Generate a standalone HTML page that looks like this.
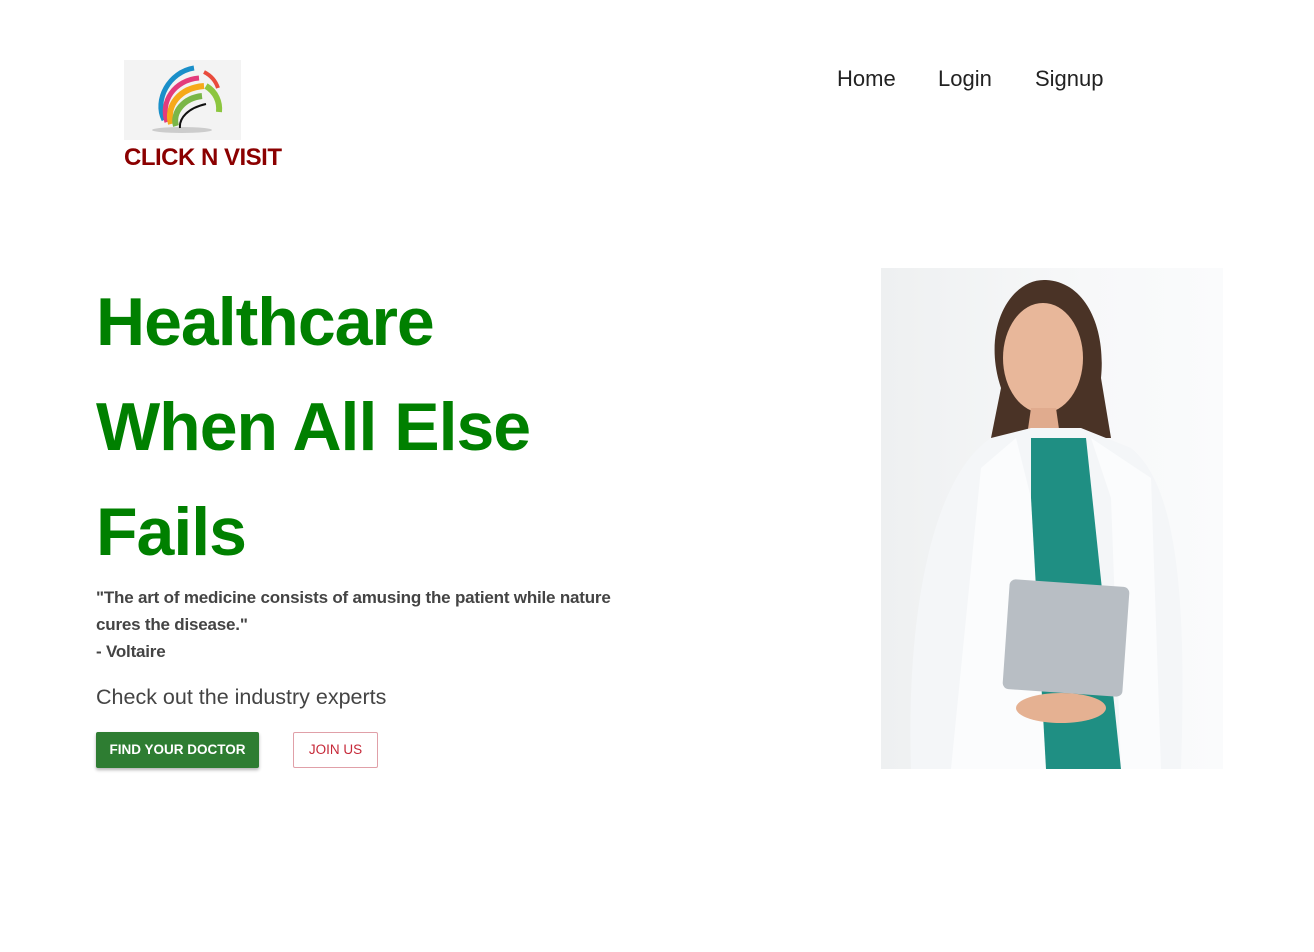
<!DOCTYPE html>
<html><head><style>
body{margin:0;background:#fff;font-family:"Liberation Sans",sans-serif;width:1314px;height:952px;position:relative;overflow:hidden}
.a{position:absolute}
nav a{position:absolute;top:66px;font-size:22px;color:#222;text-decoration:none}
h1{position:absolute;left:96px;top:270px;margin:0;font-size:68px;line-height:105px;color:#008000;font-weight:bold;letter-spacing:-1px}
</style></head><body>
<div class="a" style="left:124px;top:60px;width:117px;height:80px;background:#f3f3f3">
<svg width="117" height="80" viewBox="0 0 117 80">
<ellipse cx="58" cy="70" rx="30" ry="3" fill="#ccc"/>
<path d="M40 60 C30 40 45 12 70 8" stroke="#1a8fc9" stroke-width="5" fill="none"/>
<path d="M43 62 C36 42 50 20 75 18" stroke="#e33b7c" stroke-width="5" fill="none"/>
<path d="M47 64 C42 46 55 28 80 26" stroke="#f6a91a" stroke-width="6" fill="none"/>
<path d="M52 66 C48 52 60 38 78 36" stroke="#7ab648" stroke-width="6" fill="none"/>
<path d="M56 68 C55 58 64 48 82 44" stroke="#111" stroke-width="2" fill="none"/>
<path d="M82 26 C92 32 96 42 95 52" stroke="#8cc63f" stroke-width="6" fill="none"/>
<path d="M80 12 C88 16 92 22 94 28" stroke="#e94b3c" stroke-width="4" fill="none"/>
</svg></div>
<div class="a" style="left:124px;top:144px;font-size:24px;font-weight:bold;color:#8b0000;letter-spacing:-0.5px">CLICK N VISIT</div>
<nav><a style="left:837px">Home</a><a style="left:938px">Login</a><a style="left:1035px">Signup</a></nav>
<h1>Healthcare<br>When All Else<br>Fails</h1>
<div class="a" style="left:96px;top:584px;width:560px;font-size:17px;line-height:27px;font-weight:bold;color:#444;letter-spacing:-0.2px">"The art of medicine consists of amusing the patient while nature cures the disease."<br>- Voltaire</div>
<div class="a" style="left:96px;top:685px;font-size:21.5px;color:#444">Check out the industry experts</div>
<div class="a" style="left:96px;top:732px;width:163px;height:36px;background:#2e7d32;color:#fff;font-size:13.5px;font-weight:bold;line-height:36px;text-align:center;border-radius:2px;box-shadow:0 2px 3px rgba(0,0,0,.3)">FIND YOUR DOCTOR</div>
<div class="a" style="left:293px;top:732px;width:83px;height:34px;border:1px solid #e0a0a8;color:#c62838;font-size:13.5px;line-height:34px;text-align:center;border-radius:2px">JOIN US</div>
<div class="a" style="left:881px;top:268px;width:342px;height:501px;background:linear-gradient(90deg,#eef0f1,#f7f8f9 60%,#fafbfc);overflow:hidden">
<svg width="342" height="501" viewBox="0 0 342 501">
<path d="M120 120 C100 60 130 10 165 12 C205 14 225 60 220 110 L230 170 L110 170 Z" fill="#4a3326"/>
<ellipse cx="162" cy="90" rx="40" ry="55" fill="#e8b79a"/>
<path d="M150 140 L175 140 L180 175 L145 175 Z" fill="#e0ab8e"/>
<path d="M30 501 C25 350 50 210 110 170 L150 160 L200 160 L250 180 C300 220 305 350 300 501 Z" fill="#f4f6f8"/>
<path d="M150 170 L205 170 L240 501 L150 501 Z" fill="#1f8f83"/>
<path d="M135 170 L150 230 L165 501 L70 501 L100 200 Z" fill="#fbfcfd"/>
<path d="M210 170 L230 230 L240 501 L280 501 L270 210 Z" fill="#fbfcfd"/>
<rect x="125" y="315" width="120" height="110" rx="6" fill="#b8bec4" transform="rotate(4 185 370)"/>
<ellipse cx="180" cy="440" rx="45" ry="15" fill="#e5b192"/>
</svg></div>
</body></html>
